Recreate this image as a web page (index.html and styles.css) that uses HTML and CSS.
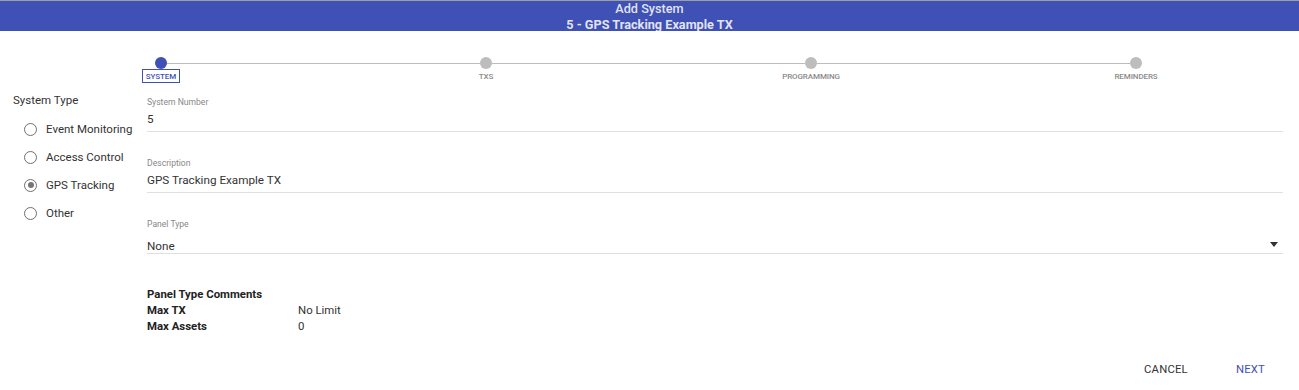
FILE: index.html
```html
<!DOCTYPE html>
<html>
<head>
<meta charset="utf-8">
<link rel="stylesheet" href="styles.css">
</head>
<body>
<div class="topstrip"></div>
<header class="dlg-header">
  <div class="dlg-title">Add System</div>
  <div class="dlg-subtitle">5 - GPS Tracking Example TX</div>
</header>

<div class="stepper">
  <div class="step active"><span class="dot"></span><span class="step-label">SYSTEM</span></div>
  <div class="connector"></div>
  <div class="step"><span class="dot"></span><span class="step-label">TXS</span></div>
  <div class="connector"></div>
  <div class="step"><span class="dot"></span><span class="step-label">PROGRAMMING</span></div>
  <div class="connector"></div>
  <div class="step"><span class="dot"></span><span class="step-label">REMINDERS</span></div>
</div>

<div class="content">
  <aside class="sidebar">
    <div class="side-title">System Type</div>
    <div class="radio-list">
      <div class="radio-row"><span class="radio"></span><span class="radio-label">Event Monitoring</span></div>
      <div class="radio-row"><span class="radio"></span><span class="radio-label">Access Control</span></div>
      <div class="radio-row"><span class="radio checked"></span><span class="radio-label">GPS Tracking</span></div>
      <div class="radio-row"><span class="radio"></span><span class="radio-label">Other</span></div>
    </div>
  </aside>

  <main class="form">
    <div class="field">
      <div class="field-label">System Number</div>
      <div class="field-value">5</div>
    </div>
    <div class="field">
      <div class="field-label">Description</div>
      <div class="field-value">GPS Tracking Example TX</div>
    </div>
    <div class="field select-field">
      <div class="field-label">Panel Type</div>
      <div class="field-value select-value"><span>None</span><span class="caret"></span></div>
    </div>

    <div class="comments">
      <div class="comments-title">Panel Type Comments</div>
      <div class="info-row"><span class="info-key">Max TX</span><span class="info-val">No Limit</span></div>
      <div class="info-row"><span class="info-key">Max Assets</span><span class="info-val">0</span></div>
    </div>
  </main>
</div>

<footer class="actions">
  <button class="btn">CANCEL</button>
  <button class="btn primary">NEXT</button>
</footer>
</body>
</html>
```

FILE: styles.css
```css
* { box-sizing: border-box; }
html, body {
  margin: 0;
  padding: 0;
  background: #ffffff;
  font-family: Roboto, "Liberation Sans", Arial, sans-serif;
  color: #333333;
}
body { width: 1299px; height: 390px; overflow: hidden; }

.topstrip { height: 1px; background: #9e9e9e; }

.dlg-header {
  height: 30px;
  background: #3f51b5;
  color: rgba(255, 255, 255, 0.86);
  text-align: center;
  font-size: 12.7px;
  line-height: 15px;
  padding-top: 0;
}
.dlg-title { font-weight: 500; }
.dlg-subtitle { font-weight: 700; padding-top: 1px; }

/* stepper */
.stepper {
  display: flex;
  align-items: flex-start;
  margin-top: 26px;
  padding-left: 155px;
  padding-right: 157px;
}
.step {
  width: 12px;
  flex: none;
  display: flex;
  flex-direction: column;
  align-items: center;
}
.dot {
  width: 12px;
  height: 12px;
  border-radius: 50%;
  background: #bdbdbd;
}
.step.active .dot { background: #3f51b5; }
.step-label {
  white-space: nowrap;
  font-size: 8px;
  font-weight: 500;
  line-height: 11px;
  color: #8a8a8a;
  padding: 1px 3px 0;
  border: 1px solid transparent;
  letter-spacing: -0.1px;
}
.step.active .step-label {
  color: #3f51b5;
  border-color: #3f51b5;
}
.connector {
  flex: 1;
  height: 1px;
  margin-top: 6px;
  background: #bdbdbd;
}

/* content */
.content { display: flex; }
.sidebar {
  width: 147px;
  flex: none;
  padding-top: 9px;
  padding-left: 13px;
}
.side-title {
  font-size: 11.5px;
  line-height: 16px;
  color: #333;
}
.radio-list { margin-top: 7px; }
.radio-row {
  display: flex;
  align-items: center;
  height: 28px;
  padding-left: 11px;
  gap: 9px;
}
.radio {
  width: 13px;
  height: 13px;
  border-radius: 50%;
  border: 1.5px solid #6f6f6f;
  display: flex;
  align-items: center;
  justify-content: center;
  flex: none;
}
.radio.checked::after {
  content: "";
  width: 6px;
  height: 6px;
  border-radius: 50%;
  background: #757575;
}
.radio-label {
  font-size: 11.5px;
  color: #333;
  white-space: nowrap;
}

.form {
  flex: 1;
  padding-top: 13px;
  padding-right: 16px;
}
.field {
  border-bottom: 1px solid #e0e0e0;
  margin-bottom: 25px;
}
.field-label {
  font-size: 8.6px;
  line-height: 12px;
  color: #888;
  margin-bottom: 3px;
}
.field-value {
  font-size: 11.7px;
  line-height: 16px;
  color: #333;
  padding-bottom: 4px;
}
.select-field { margin-bottom: 32px; }
.select-field .field-label { margin-top: 0; }
.select-value {
  display: flex;
  justify-content: space-between;
  align-items: center;
  margin-top: 9px;
  line-height: 14px;
  padding-bottom: 0;
  padding-right: 5px;
}
.caret {
  width: 0;
  height: 0;
  border-left: 4.5px solid transparent;
  border-right: 4.5px solid transparent;
  border-top: 5px solid #333;
  margin-top: -3px;
}

.comments { font-size: 11.4px; line-height: 16px; }
.comments-title { font-weight: 700; color: #222; }
.info-row { display: flex; }
.info-key { width: 151px; font-weight: 700; color: #222; }
.info-val { color: #333; }

.actions {
  display: flex;
  justify-content: flex-end;
  gap: 16px;
  padding-right: 18px;
  margin-top: 28px;
}
.btn {
  background: none;
  border: none;
  padding: 0 16px;
  font-family: Roboto, "Liberation Sans", Arial, sans-serif;
  font-size: 11.3px;
  line-height: 16px;
  color: #333;
  letter-spacing: 0.2px;
}
.btn.primary { color: #3f51b5; }
```
